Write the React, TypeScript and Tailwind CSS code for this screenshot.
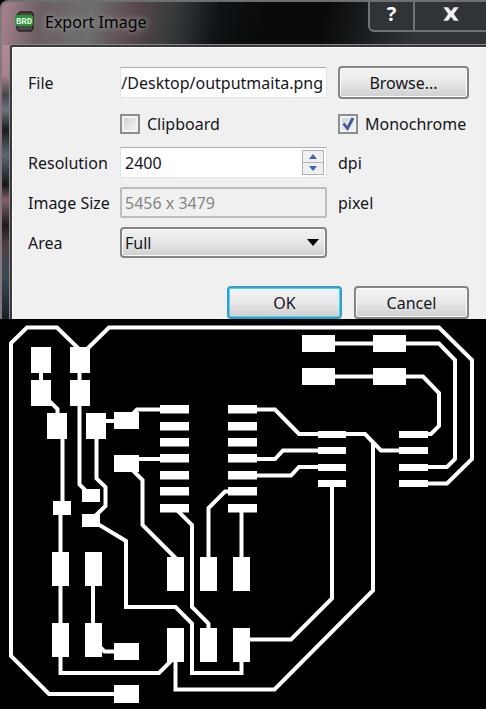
import { useState } from "react";
import type { ReactNode } from "react";

const FIELD = "h-[31px] w-full min-w-0 border text-base";
const BUTTON = "h-[33px] rounded-[4px] border-2 bg-linear-to-b from-[#f4f4f4] via-[#e8e8e8] via-50% to-[#cfcfcf] text-base";
const BUTTON_PLAIN = "border-[#858585] shadow-[inset_0_0_0_1px_#fbfbfb]";
const BUTTON_DEFAULT = "border-[#3c9cc8] shadow-[inset_0_0_0_1px_#48d4f8]";

// [x, y, width, height]
const PADS = [
  [31, 347, 20, 26],
  [70, 347, 20, 26],
  [31, 380, 20, 26],
  [70, 380, 20, 26],
  [47, 413, 20, 26],
  [86, 413, 20, 26],
  [114, 412, 25, 17],
  [114, 455, 25, 17],
  [82, 489, 18, 13],
  [53, 501, 18, 14],
  [82, 514, 18, 13],
  [52, 552, 17, 34],
  [85, 552, 17, 34],
  [52, 623, 17, 34],
  [85, 623, 17, 34],
  [167, 557, 17, 34],
  [200, 557, 17, 34],
  [233, 557, 17, 34],
  [167, 628, 17, 34],
  [200, 628, 17, 34],
  [233, 628, 17, 34],
  [114, 643, 25, 17],
  [114, 685, 25, 18],
  [302, 335, 33, 17],
  [373, 335, 33, 17],
  [302, 368, 33, 17],
  [373, 368, 33, 17],
];

const SOIC_ROWS = [405, 422, 438, 454, 471, 487, 504];
const HEADER_ROWS = [431, 447, 464, 480];

const TRACES = [
  "M80 350 L57 327.5 H27 L11 343 V656 L49 694 H120",
  "M84 352 L109 327.5 H439 L472 360 V459 L447 483.5 H414",
  "M320 343.5 H439 L455 360 V459 L447 467 H414",
  "M320 376.5 H423 L439 393 V426 L431 434 H414",
  "M41 360 V393 L57.5 409 V426",
  "M79.5 360 V484.5 L90 495",
  "M62.5 426 V508",
  "M60.5 508 V673 H159 L175.5 656.5",
  "M96.5 426 V478.5 L105.5 487 V506 L91 520 L126 541 V607 H175.5 L192 623.5 V673 H241.5 V645",
  "M96 421 H126 L137 409.5 H175",
  "M126 459 H175",
  "M126 463.5 L142.5 480 V525 L176 558.5",
  "M175 508 L192 525 V607 L208.5 623.5 V640",
  "M242 491.5 H225 L208.5 508 V570",
  "M241.5 508 V570",
  "M242 409.5 H275 L299 434 H365 L381 450.5 H414",
  "M373 442 V590.5 L274.5 689.5 H175.5 V650",
  "M242 459 H275 L283 450.5 H332",
  "M242 475.5 H291 L299 467 H332",
  "M332 484 V598.5 L291 639.5 H242",
  "M93 570 V640 L104.5 651.5 H126",
];

function Board() {
  return (
    <svg viewBox="0 319 486 390" className="block h-auto w-full bg-black" role="img" aria-label="Circuit board">
      <g fill="none" stroke="#fff" strokeWidth="4">
        {TRACES.map((d) => (
          <path key={d} d={d} />
        ))}
      </g>
      <g fill="#fff">
        {PADS.map(([x, y, w, h]) => (
          <rect key={`${x}-${y}`} x={x} y={y} width={w} height={h} />
        ))}
        {SOIC_ROWS.map((y) => (
          <g key={y}>
            <rect x="160" y={y} width="29" height="8.5" />
            <rect x="228" y={y} width="29" height="8.5" />
          </g>
        ))}
        {HEADER_ROWS.map((y) => (
          <g key={y}>
            <rect x="318" y={y} width="28" height="7" />
            <rect x="399" y={y} width="29" height="7" />
          </g>
        ))}
      </g>
    </svg>
  );
}

function BrdIcon() {
  return (
    <svg viewBox="0 0 20 22" className="h-[22px] w-5 shrink-0" aria-hidden="true">
      <path d="M5 1h11l2 2v15l-2 2H4l-2-2V4z" fill="#4a4748" stroke="#262425" strokeWidth="1.5" />
      <rect x="0" y="4" width="18" height="11" rx="2" fill="#2d9435" />
      <text x="9" y="13" fontSize="9" fontWeight="700" textAnchor="middle" fill="#e4f5e3" fontFamily="Liberation Mono, monospace">
        BRD
      </text>
    </svg>
  );
}

function TitleBar() {
  return (
    <header className="flex h-[43px] items-start justify-between">
      <div className="flex items-center gap-[10px] pt-[8px] pl-[13px]">
        <BrdIcon />
        <h1 className="text-base whitespace-nowrap text-black [text-shadow:0_0_6px_#aaa,0_0_12px_#888]">Export Image</h1>
      </div>
      <div className="flex h-[30px] w-[118px] rounded-bl-md border-b-2 border-l-2 border-[#6f7375] bg-[#303436] text-white">
        <button type="button" aria-label="Help" className="flex w-[45px] items-center justify-center border-r-2 border-[#6f7375] pb-1 text-xl font-bold">
          ?
        </button>
        <button type="button" aria-label="Close" className="flex flex-1 items-center justify-center pb-1">
          <svg viewBox="0 0 16 14" className="h-[14px] w-4" aria-hidden="true">
            <path d="M0 0h5l3 4 3-4h5l-5 7 5 7h-5l-3-4-3 4H0l5-7z" fill="#f4f4f4" stroke="#4a4d60" strokeWidth=".6" />
          </svg>
        </button>
      </div>
    </header>
  );
}

function Check({ id, checked, onChange, children }: { id: string; checked: boolean; onChange: (v: boolean) => void; children: ReactNode }) {
  return (
    <div className="flex items-center gap-[7px] pt-[2px]">
      <span className="grid size-5 shrink-0">
        <input
          id={id}
          type="checkbox"
          checked={checked}
          onChange={(e) => onChange(e.target.checked)}
          className="col-start-1 row-start-1 size-5 appearance-none border-2 border-[#8c8e8f] bg-linear-to-br from-[#cbcfd3] to-[#f8f8f8] shadow-[inset_0_0_0_2px_#f2f2f2]"
        />
        {checked && (
          <svg viewBox="0 0 20 20" className="pointer-events-none col-start-1 row-start-1 size-5" aria-hidden="true">
            <path d="M5.500 9.500l4 5 5.500-10.500" fill="none" stroke="#405499" strokeWidth="2.8" />
          </svg>
        )}
      </span>
      <label htmlFor={id}>{children}</label>
    </div>
  );
}

export default function App() {
  const [file, setFile] = useState("/Desktop/outputmaita.png");
  const [clipboard, setClipboard] = useState(false);
  const [mono, setMono] = useState(true);
  const [resolution, setResolution] = useState(2400);

  return (
    <main className="bg-black font-['Noto_Sans',sans-serif] text-base text-[#15151c]">
      <section className="overflow-hidden rounded-tl-lg border-t-2 border-l-2 border-t-[#6d6f70] border-l-[#85777c] bg-[linear-gradient(100deg,#a98290_0,#6b6063_40px,#6e6e6e_90px,#5a4a4d_130px,#34383a_175px,#101315_215px,#080a0c_260px,#080a0c_320px,#303436_410px)]">
        <TitleBar />
        <div className="bg-[linear-gradient(#b08a96_0,#a98290_30px,#47464a_50px,#6b7379_65px,#1c1c1e_85px,#5b6870_110px,#171719_140px,#80626b_155px,#1c1a1c_180px,#4c4045_200px,#3c4a54_230px,#1a1f24_274px)] pl-[8px]">
          <form
            className="rounded-tl-[3px] border-t-2 border-l-2 border-[#3a3a3c] bg-[#f0f0f0] pt-[20px] pr-[17px] pl-4 shadow-[0_0_0_1px_#8a8688,inset_1px_1px_0_0_#fff]"
            onSubmit={(e) => e.preventDefault()}
          >
            <div className="grid auto-rows-[31px] grid-cols-[81px_1fr_131px] items-center gap-x-[11px] gap-y-[9px] whitespace-nowrap">
              <label htmlFor="file">File</label>
              <input
                id="file"
                value={file}
                onChange={(e) => setFile(e.target.value)}
                className={`${FIELD} border-[#e2e3ea] border-t-[#abadb3] bg-white pr-[3px] pl-0 text-right`}
              />
              <button type="button" className={`${BUTTON} ${BUTTON_PLAIN}`}>
                Browse...
              </button>

              <div className="col-start-2">
                <Check id="clipboard" checked={clipboard} onChange={setClipboard}>
                  Clipboard
                </Check>
              </div>
              <Check id="mono" checked={mono} onChange={setMono}>
                Monochrome
              </Check>

              <label htmlFor="resolution">Resolution</label>
              <div className="flex h-[31px] min-w-0 border border-[#e2e3ea] border-t-[#abadb3] bg-white p-[2px]">
                <input
                  id="resolution"
                  inputMode="numeric"
                  value={resolution}
                  onChange={(e) => setResolution(Number(e.target.value) || 0)}
                  className="w-full min-w-0 flex-1 px-[2px] text-base"
                />
                <div className="flex w-[22px] flex-col border border-[#b0b2b8] bg-[#f0f0f0]">
                  <button type="button" aria-label="Increase" onClick={() => setResolution(resolution + 1)} className="flex flex-1 items-center justify-center border-b border-[#b0b2b8]">
                    <svg viewBox="0 0 8 5" className="h-[5px] w-2" aria-hidden="true">
                      <path d="M0 5l4-5 4 5z" fill="#4a62b4" />
                    </svg>
                  </button>
                  <button type="button" aria-label="Decrease" onClick={() => setResolution(resolution - 1)} className="flex flex-1 items-center justify-center">
                    <svg viewBox="0 0 8 5" className="h-[5px] w-2" aria-hidden="true">
                      <path d="M0 0l4 5 4-5z" fill="#4a62b4" />
                    </svg>
                  </button>
                </div>
              </div>
              <span>dpi</span>

              <label htmlFor="size">Image Size</label>
              <input id="size" value="5456 x 3479" disabled className={`${FIELD} rounded-[2px] border-2 border-[#bcbcbc] bg-[#f0f0f0] px-[3px] text-[#858585]`} />
              <span>pixel</span>

              <label htmlFor="area">Area</label>
              <div className="grid min-w-0 items-center">
                <select
                  id="area"
                  defaultValue="Full"
                  className="col-start-1 row-start-1 h-[31px] w-full appearance-none rounded-[4px] border-2 border-[#858585] bg-linear-to-b from-[#f2f2f2] via-[#e6e6e6] via-50% to-[#cfcfcf] px-[3px] text-base shadow-[inset_0_0_0_1px_#fbfbfb]"
                >
                  <option>Full</option>
                  <option>Window</option>
                </select>
                <svg viewBox="0 0 12 7" className="pointer-events-none col-start-1 row-start-1 mr-2 h-[7px] w-3 justify-self-end" aria-hidden="true">
                  <path d="M0 0h12L6 7z" fill="#000" />
                </svg>
              </div>
            </div>

            <div className="mt-[28px] flex justify-end gap-3">
              <button type="submit" className={`${BUTTON} ${BUTTON_DEFAULT} w-[115px]`}>
                OK
              </button>
              <button type="button" className={`${BUTTON} ${BUTTON_PLAIN} w-[115px]`}>
                Cancel
              </button>
            </div>
          </form>
        </div>
      </section>
      <Board />
    </main>
  );
}
